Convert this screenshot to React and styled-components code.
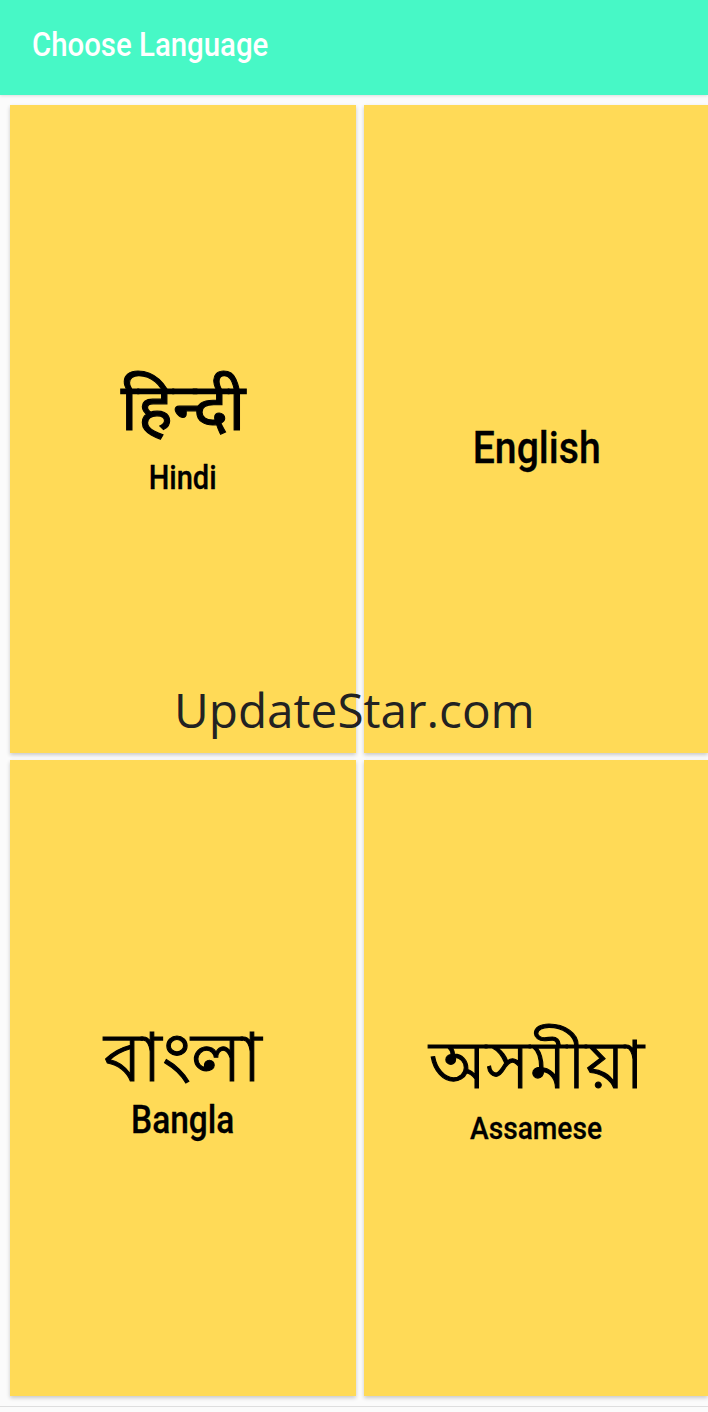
import React from "react";
import styled, { createGlobalStyle } from "styled-components";

const Global = createGlobalStyle`
  html, body { margin: 0; padding: 0; background: #fcfcfc; }
  * { box-sizing: border-box; }
`;
const Page = styled.div`
  position: relative;
  width: 708px;
  height: 1412px;
  overflow: hidden;
  background: #fbfbfb;
  font-family: Roboto, "Noto Sans", sans-serif;
  display: flex;
  flex-direction: column;
`;
const Bar = styled.header`
  height: 95px;
  flex: none;
  background: #47f8c6;
  padding: 25px 0 0 32px;
  box-shadow: 0 1px 3px rgba(0,0,0,.12);
`;
const Title = styled.h1`
  margin: 0;
  color: #fff;
  font-size: 33.4px;
  line-height: 40px;
  font-weight: 500;
  transform: scaleX(.88);
  transform-origin: left;
`;
const Grid = styled.main`
  display: grid;
  grid-template-columns: 346px 344px;
  grid-template-rows: 648px 636px;
  gap: 7px 8px;
  padding: 10px 0 0 10px;
`;
const Card = styled.section`
  background: #ffda57;
  box-shadow: 0 2px 4px rgba(0,0,0,.2);
  display: flex;
  flex-direction: column;
  align-items: center;
  justify-content: center;
  padding-top: ${p => p.$top || 0}px;
  padding-left: ${p => p.$left || 0}px;
  color: #000;
`;
const Script = styled.div`
  font-family: "Noto Sans", "DejaVu Sans", sans-serif;
  font-size: ${p => p.$size}px;
  line-height: 1.2;
  margin-bottom: ${p => p.$gap || 0}px;
  -webkit-text-stroke: 1.1px #000;
`;
const Label = styled.div`
  font-weight: 500;
  font-size: ${p => p.$size}px;
  -webkit-text-stroke: .3px #000;
  transform: scaleX(.88);
`;
const FootLine = styled.div`
  margin-top: 10px;
  height: 1px;
  flex: none;
  background: #dedede;
`;
const Watermark = styled.div`
  position: absolute;
  left: 174px;
  top: 677px;
  font-family: "Open Sans", sans-serif;
  font-size: 47.7px;
  color: #222;
  line-height: 66px;
`;

export default function App() {
  return (
    <Page>
      <Global />
      <Bar><Title>Choose Language</Title></Bar>
      <Grid>
        <Card $top={4}><Script $size={66} $gap={14}>हिन्दी</Script><Label $size={33}>Hindi</Label></Card>
        <Card $top={37} $left={2}><Label $size={44.5}>English</Label></Card>
        <Card $top={-15}><Script $size={68} $gap={3}>বাংলা</Script><Label $size={38}>Bangla</Label></Card>
        <Card $top={14} $left={1}><Script $size={66} $gap={6}>অসমীয়া</Script><Label $size={32}>Assamese</Label></Card>
      </Grid>
      <FootLine />
      <Watermark>UpdateStar.com</Watermark>
    </Page>
  );
}
